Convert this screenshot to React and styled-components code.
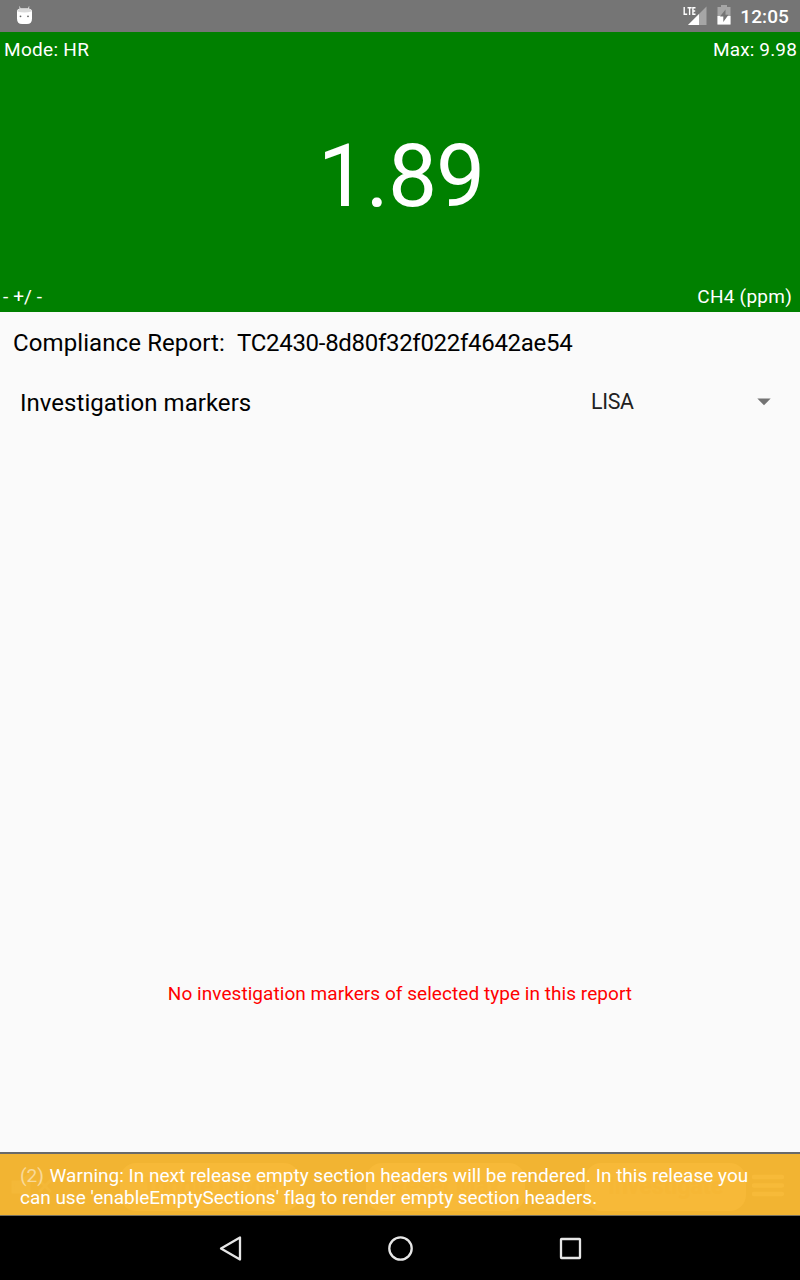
import React from "react";
import styled, { createGlobalStyle } from "styled-components";

const GlobalStyle = createGlobalStyle`
  * { box-sizing: border-box; }
  body { margin: 0; background: #fafafa; font-family: Roboto, "Liberation Sans", sans-serif; }
`;

const Screen = styled.div`
  width: 800px;
  height: 1280px;
  display: flex;
  flex-direction: column;
  background: #fafafa;
  overflow: hidden;
`;

const StatusBar = styled.header`
  flex: 0 0 32px;
  display: flex;
  align-items: center;
  justify-content: space-between;
  padding: 0 11px 0 16px;
  background: #757575;
  color: #fff;
`;

const StatusIcons = styled.div`
  display: flex;
  align-items: center;
  height: 32px;
`;

const Clock = styled.span`
  font-size: 19px;
  font-weight: 500;
  line-height: 32px;
  letter-spacing: 0.1px;
  padding-top: 1px;
  margin-left: 4px;
`;

const Reading = styled.section`
  flex: 0 0 280px;
  display: flex;
  flex-direction: column;
  justify-content: space-between;
  background: #008000;
  color: #fff;
`;

const ReadingRow = styled.div`
  display: flex;
  justify-content: space-between;
  font-size: 19px;
  line-height: 22px;
  padding: ${(p) => p.$pad};
`;

const Spaced = styled.span`
  letter-spacing: ${(p) => p.$by}px;
`;

const Value = styled.div`
  font-size: 87.5px;
  line-height: 104px;
  letter-spacing: -1px;
  text-align: center;
  padding: 5px 0 0 2px;
`;

const ReportTitle = styled.h1`
  flex: 0 0 60px;
  margin: 0;
  padding: 16px 13px 0;
  font-size: 24px;
  line-height: 30px;
  font-weight: 400;
  color: #000;
  white-space: pre;
`;

const FilterRow = styled.div`
  flex: 0 0 60px;
  display: flex;
  align-items: center;
  padding: 0 29px 0 20px;
`;

const FilterLabel = styled.span`
  width: 571px;
  padding-top: 2px;
  font-size: 24px;
  line-height: 30px;
  letter-spacing: 0.03px;
  color: #000;
`;

const Picker = styled.div`
  flex: 1;
  display: flex;
  align-items: center;
  justify-content: space-between;
  font-size: 21.33px;
  line-height: 26px;
  letter-spacing: -0.3px;
  color: #212121;
`;

const Results = styled.main`
  flex: 1;
  display: flex;
  justify-content: center;
  align-items: flex-end;
  padding-bottom: 147px;
`;

const EmptyMessage = styled.p`
  margin: 0;
  font-size: 19px;
  line-height: 22px;
  letter-spacing: 0.05px;
  color: #ff0000;
`;

const Footer = styled.div`
  position: relative;
  flex: 0 0 64px;
  border-top: 2px solid #696969;
  border-bottom: 1px solid #75705f;
  background: #f2b432;
`;

const Toolbar = styled.div`
  display: flex;
  align-items: center;
  height: 61px;
  padding: 4px 16px 0 10px;
`;

const ToolButton = styled.div`
  width: ${(p) => p.$width}px;
  height: 48px;
  margin-left: ${(p) => p.$gap}px;
  border-radius: 16px;
  background: #f7b938;
  color: #f6b735;
  font-size: 23px;
  font-weight: 700;
  line-height: 47px;
  text-align: center;
  white-space: nowrap;
`;

const MenuIcon = styled.svg`
  margin: -1px 0 0 6px;
`;

const Warning = styled.p`
  position: absolute;
  inset: 0;
  margin: 0;
  padding: 11px 20px 0;
  font-size: 19px;
  line-height: 22px;
  color: #fff;
`;

const WarningLine = styled.span`
  display: block;
  white-space: nowrap;
  letter-spacing: ${(p) => p.$spacing}px;
`;

const Count = styled.span`
  margin-right: 1px;
  opacity: 0.5;
`;

const NavBar = styled.nav`
  flex: 0 0 64px;
  display: flex;
  justify-content: center;
  align-items: center;
  gap: 138px;
  background: #000;
`;

export default function App() {
  return (
    <>
      <GlobalStyle />
      <Screen>
        <StatusBar>
          <svg width="17" height="32" viewBox="0 0 17 32">
            <path d="M3.5 6.5 4.500 10M13 6.5 12 10" stroke="#d2d2d2" strokeWidth="1" />
            <path d="M1 11.5Q1 8.5 5 8.5h6.500Q16 8.500 16 11.500v7q0 5.500-5 5.500H6q-5 0-5-5.500z" fill="#fff" />
            <path d="M1.500 11.500Q2 8.500 5 8.500h6.500Q15.500 8.500 15.500 11.500q-7 2-14 0z" fill="#dadada" />
            <circle cx="4.500" cy="16.300" r=".9" fill="#666" />
            <circle cx="12" cy="16.300" r=".9" fill="#666" />
          </svg>
          <StatusIcons>
            <svg width="27" height="32" viewBox="0 0 27 32">
              <path d="M23.500 6.500V25H5z" fill="#a6a6a6" />
              <path d="M16 14v11H5z" fill="#fff" />
              <path d="M1.200 7v7.300h3M4.500 7.700h4.200M6.600 7.700V15M12.500 7.700H9.900v6.600h2.600M9.900 11h2.300" fill="none" stroke="#fff" strokeWidth="1.400" />
            </svg>
            <svg width="26" height="32" viewBox="0 0 26 32">
              <path d="M11 7V5h6v2h3.500v17.500h-13V7z" fill="#a6a6a6" />
              <path d="M7.500 16h13v8.500h-13z" fill="#fff" />
              <path d="M15.500 9.500 10 16.500h3.300V22l5.200-7.300h-3z" fill="#757575" />
            </svg>
            <Clock>12:05</Clock>
          </StatusIcons>
        </StatusBar>
        <Reading>
          <ReadingRow $pad="7px 3px 0 4px"><Spaced $by={0.3}>Mode: HR</Spaced><Spaced $by={0.15}>Max: 9.98</Spaced></ReadingRow>
          <Value>1.89</Value>
          <ReadingRow $pad="0 8px 4px 3px"><Spaced $by={0.1}>- +/ -</Spaced><Spaced $by={0.25}>CH4 (ppm)</Spaced></ReadingRow>
        </Reading>
        <ReportTitle>
          <Spaced $by={0.1}>{"Compliance Report:  "}</Spaced>
          <Spaced $by={-0.3}>TC2430-8d80f32f022f4642ae54</Spaced>
        </ReportTitle>
        <FilterRow>
          <FilterLabel>Investigation markers</FilterLabel>
          <Picker>
            LISA
            <svg width="14" height="8" viewBox="0 0 14 8"><path d="M.3.500h13.400L7 7.200z" fill="#737373" /></svg>
          </Picker>
        </FilterRow>
        <Results>
          <EmptyMessage>No investigation markers of selected type in this report</EmptyMessage>
        </Results>
        <Footer>
          <Toolbar>
            <svg width="43" height="34" viewBox="0 0 43 34">
              <path d="M3 12h7l9-7v24l-9-7H3zM29 10l12 12M41 10 29 22" fill="#f4b838" stroke="#f4b838" strokeWidth="3" />
            </svg>
            <ToolButton $width={180} $gap={67}>Toggle Mode</ToolButton>
            <ToolButton $width={160} $gap={66}>Reset Max</ToolButton>
            <ToolButton $width={161} $gap={60}>Investigate</ToolButton>
            <MenuIcon width="32" height="24" viewBox="0 0 32 24">
              <path d="M2 3h28M2 11.500h28M2 20h28" stroke="#f7ba39" strokeWidth="4.500" strokeLinecap="round" />
            </MenuIcon>
          </Toolbar>
          <Warning>
            <WarningLine $spacing={0.01}>
              <Count>(2)</Count> Warning: In next release empty section headers will be rendered. In this release you
            </WarningLine>
            <WarningLine $spacing={-0.02}>
              can use 'enableEmptySections' flag to render empty section headers.
            </WarningLine>
          </Warning>
        </Footer>
        <NavBar>
          <svg width="32" height="32" viewBox="0 0 32 32"><path d="M7 16.500 26 5.500v22z" fill="none" stroke="#e6e6e6" strokeWidth="2.300" strokeLinejoin="round" /></svg>
          <svg width="32" height="32" viewBox="0 0 32 32"><circle cx="16.500" cy="16.500" r="11.200" fill="none" stroke="#e6e6e6" strokeWidth="2.300" /></svg>
          <svg width="32" height="32" viewBox="0 0 32 32"><rect x="7" y="7" width="19" height="19" rx=".5" fill="none" stroke="#e6e6e6" strokeWidth="2.300" /></svg>
        </NavBar>
      </Screen>
    </>
  );
}
